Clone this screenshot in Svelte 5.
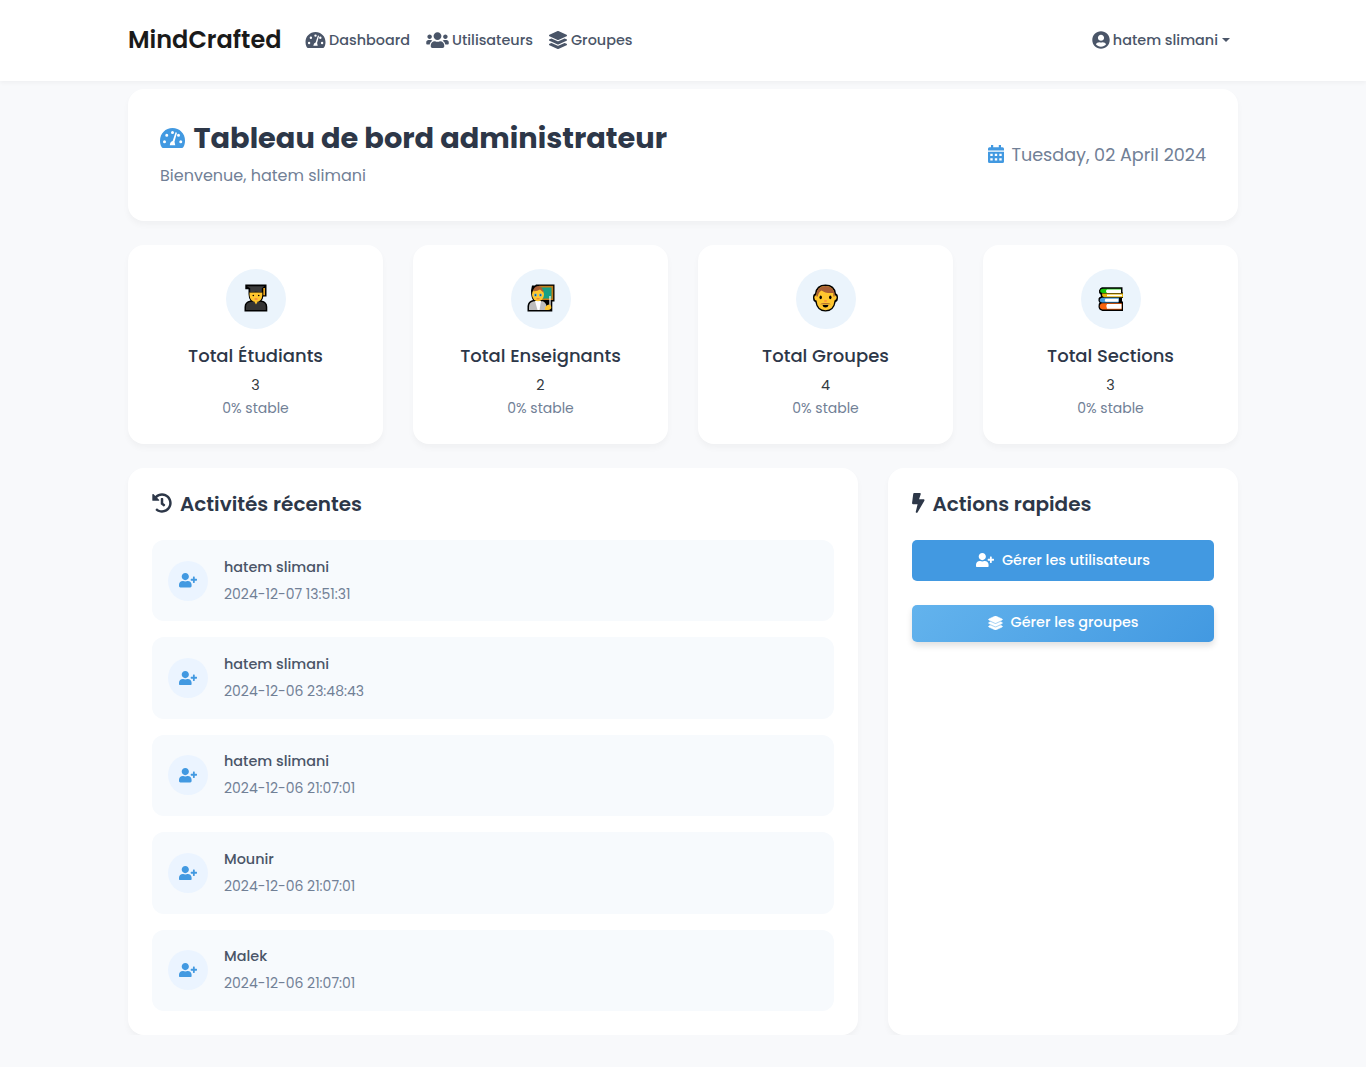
<script>
  const icons = {
    gauge: {
      box: '0 0 50 40',
      d: 'M25 0C11 0 0 11 0 25c0 4.700 .8 8.500 2.600 12C3.700 39.200 5 40 7.500 40h35c2.500 0 3.800-.8 4.900-3C49.200 33.500 50 29.700 50 25 50 11 39 0 25 0ZM9 24.500a3 3 0 1 1 0 6 3 3 0 1 1 0-6ZM13.500 11.500a3 3 0 1 1 0 6 3 3 0 1 1 0-6ZM25 6a3 3 0 1 1 0 6 3 3 0 1 1 0-6ZM37 11.500a3 3 0 1 1 0 6 3 3 0 1 1 0-6ZM41.500 24.500a3 3 0 1 1 0 6 3 3 0 1 1 0-6ZM31.200 8.600q2.500-.3 2.500 2L29 27.500 30.500 34.500H19.500Q20.500 27 25.300 26Z'
    },
    users: {
      box: '0 0 640 512',
      d: 'M96 224c35.3 0 64-28.7 64-64s-28.7-64-64-64-64 28.7-64 64 28.7 64 64 64zm448 0c35.3 0 64-28.7 64-64s-28.7-64-64-64-64 28.7-64 64 28.7 64 64 64zm32 32h-64c-17.6 0-33.5 7.1-45.1 18.6 40.3 22.1 68.9 62 75.1 109.4h66c17.7 0 32-14.3 32-32v-32c0-35.3-28.7-64-64-64zm-256 0c61.9 0 112-50.1 112-112S381.9 32 320 32 208 82.1 208 144s50.1 112 112 112zm76.8 32h-8.3c-20.8 10-43.9 16-68.5 16s-47.6-6-68.5-16h-8.3C179.6 288 128 339.6 128 403.2V432c0 26.5 21.5 48 48 48h288c26.5 0 48-21.5 48-48v-28.8c0-63.6-51.6-115.2-115.2-115.2zm-223.7-13.4C161.5 263.1 145.6 256 128 256H64c-35.3 0-64 28.7-64 64v32c0 17.7 14.3 32 32 32h65.9c6.3-47.4 34.9-87.3 75.2-109.4z'
    },
    layers: {
      box: '0 0 512 512',
      d: 'M12.41 148.02l232.94 105.67c6.8 3.09 14.49 3.09 21.29 0l232.94-105.67c16.55-7.51 16.55-32.52 0-40.03L266.65 2.31a25.607 25.607 0 0 0-21.29 0L12.41 107.98c-16.55 7.51-16.55 32.53 0 40.04zm487.18 88.28l-58.09-26.33-161.64 73.27c-7.56 3.43-15.59 5.17-23.86 5.17s-16.29-1.74-23.86-5.17L70.51 209.97l-58.1 26.33c-16.55 7.5-16.55 32.5 0 40l232.94 105.59c6.8 3.08 14.49 3.08 21.29 0L499.59 276.3c16.55-7.5 16.55-32.5 0-40zm0 127.8l-57.87-26.23-161.86 73.37c-7.56 3.43-15.59 5.17-23.86 5.17s-16.29-1.74-23.86-5.17L70.29 337.87 12.41 364.1c-16.55 7.5-16.55 32.5 0 40l232.94 105.59c6.8 3.08 14.49 3.08 21.29 0L499.59 404.1c16.55-7.5 16.55-32.5 0-40z'
    },
    account: {
      box: '0 0 496 512',
      d: 'M248 8C111 8 0 119 0 256s111 248 248 248 248-111 248-248S385 8 248 8zm0 96c48.6 0 88 39.4 88 88s-39.4 88-88 88-88-39.400-88-88 39.4-88 88-88zm0 344c-58.7 0-111.3-26.6-146.5-68.2 18.8-35.4 55.6-59.8 98.5-59.8 2.4 0 4.8.4 7.1 1.1 13 4.2 26.6 6.9 40.9 6.9 14.3 0 28-2.7 40.9-6.9 2.3-.7 4.7-1.1 7.1-1.1 42.9 0 79.7 24.4 98.5 59.8C359.3 421.4 306.7 448 248 448z'
    },
    calendar: {
      box: '0 0 16 18',
      d: 'M3 0h2.200v2.200H10.800V0H13v2.200h1.500Q16 2.200 16 3.700V5.600H0V3.700Q0 2.200 1.500 2.200H3ZM0 6.700H16V16.500Q16 18 14.500 18H1.500Q0 18 0 16.500ZM2.300 8.800v2.200h2.400V8.800ZM6.800 8.800v2.200h2.400V8.800ZM11.300 8.800v2.200h2.400V8.800ZM2.300 13.200v2.200h2.400v-2.200ZM6.800 13.200v2.200h2.400v-2.200ZM11.300 13.200v2.200h2.400v-2.200Z'
    },
    history: {
      box: '0 0 512 512',
      d: 'M504 255.531c.253 136.64-111.18 248.372-247.82 248.468-59.015.042-113.223-20.53-155.822-54.911-11.077-8.94-11.905-25.541-1.839-35.607l11.267-11.267c8.609-8.609 22.353-9.551 31.891-1.984C173.062 425.135 212.781 440 256 440c101.705 0 184-82.311 184-184 0-101.705-82.311-184-184-184-48.814 0-93.149 18.969-126.068 49.932l50.754 50.754c10.08 10.08 2.941 27.314-11.313 27.314H24c-8.837 0-16-7.163-16-16V38.627c0-14.254 17.234-21.393 27.314-11.314l49.372 49.372C129.209 34.136 189.552 8 256 8c136.81 0 247.747 110.78 248 247.531zm-180.912 78.784l9.823-12.63c8.138-10.463 6.253-25.542-4.21-33.679L288 256.349V152c0-13.255-10.745-24-24-24h-16c-13.255 0-24 10.745-24 24v135.651l65.409 50.874c10.463 8.137 25.541 6.253 33.679-4.21z'
    },
    bolt: {
      box: '0 0 320 512',
      d: 'M296 160H180.6l42.6-129.8C227.2 15 215.7 0 200 0H56C44 0 33.8 8.9 32.2 20.8l-32 240C-1.7 275.2 9.5 288 24 288h118.700L96.6 482.5c-3.6 15.2 8 29.5 23.3 29.5 8.4 0 16.4-4.4 20.8-12l176-304c9.3-15.9-2.2-36-20.7-36z'
    },
    userPlus: {
      box: '0 0 640 512',
      d: 'M624 208h-64v-64c0-8.8-7.2-16-16-16h-32c-8.8 0-16 7.2-16 16v64h-64c-8.8 0-16 7.2-16 16v32c0 8.8 7.2 16 16 16h64v64c0 8.8 7.2 16 16 16h32c8.8 0 16-7.2 16-16v-64h64c8.8 0 16-7.2 16-16v-32c0-8.8-7.2-16-16-16zm-400 48c70.7 0 128-57.3 128-128S294.7 0 224 0 96 57.3 96 128s57.3 128 128 128zm89.6 32h-16.7c-22.2 10.2-46.9 16-72.9 16s-50.6-5.8-72.9-16h-16.7C60.2 288 0 348.2 0 422.4V464c0 26.5 21.5 48 48 48h352c26.5 0 48-21.5 48-48v-41.6c0-74.2-60.2-134.4-134.4-134.4z'
    }
  };

  const stats = [
    { label: 'Total Étudiants', value: 3, picture: 'student' },
    { label: 'Total Enseignants', value: 2, picture: 'teacher' },
    { label: 'Total Groupes', value: 4, picture: 'man' },
    { label: 'Total Sections', value: 3, picture: 'books' }
  ];

  const activities = [
    { name: 'hatem slimani', time: '2024-12-07 13:51:31' },
    { name: 'hatem slimani', time: '2024-12-06 23:48:43' },
    { name: 'hatem slimani', time: '2024-12-06 21:07:01' },
    { name: 'Mounir', time: '2024-12-06 21:07:01' },
    { name: 'Malek', time: '2024-12-06 21:07:01' }
  ];
</script>

{#snippet icon(name, cls)}
  <svg class="icon {cls}" viewBox={icons[name].box} aria-hidden="true">
    <path d={icons[name].d} fill="currentColor" fill-rule={name === 'gauge' || name === 'calendar' ? 'evenodd' : 'nonzero'} />
  </svg>
{/snippet}

{#snippet emoji(kind)}
  <svg class="emoji" viewBox="0 0 28 28" aria-hidden="true">
    {#if kind === 'student'}
      <path d="M3.300 .6H24.500V12.500H21.300Q21 15.500 19.500 16.500 25.300 17.500 25.300 23V27.500H2.500V23Q2.500 17.500 8.500 16.500 6.500 14 6.500 10V5.300H3.300Z" fill="#000" />
      <path d="M4 26V23Q4 18.300 9.500 17.800H18.500Q23.800 18.300 23.800 23V26Z" fill="#343434" />
      <path d="M7.500 8.500H20.300V11Q20 17.900 14 17.900T7.500 11Z" fill="#ffc62e" />
      <path d="M12.300 17.500H15.700L14 20.500Z" fill="#ffc62e" />
      <path d="M4.800 2.200H22.500L19.800 4.200V8.300Q14 7.300 8.200 8.300V4.200Z" fill="#3b3b3b" />
      <path d="M21.300 4V11.200H23V4Z" fill="#e9a51f" />
      <circle cx="11.300" cy="11.500" r=".8" /><circle cx="16.700" cy="11.500" r=".8" />
      <path d="M12.500 15h3" stroke="#ef7348" stroke-width="1.200" />
    {:else if kind === 'teacher'}
      <path d="M5 1.500H8L9 .5H27.500V17.500H25.300V27.500H.5V22Q1 17 6 16 4 13.500 4 6.500Z" fill="#000" />
      <path d="M12 1.800H26.200V16H12Z" fill="#c17c18" />
      <path d="M14 3.500H24.500V14.500H14Z" fill="#16a085" />
      <path d="M2 26V23Q2 18 7 17.200H16Q20 19 20 26Z" fill="#bdbdbd" />
      <path d="M8 17H14L12.500 26H10.500Z" fill="#fff" />
      <ellipse cx="11" cy="10.500" rx="6" ry="6.700" fill="#ffc62e" />
      <path d="M6 7Q7 2.500 11 2T17 9L13 5.500Q9 8 6 7Z" fill="#a85f35" />
      <circle cx="8.500" cy="11" r="1.500" fill="#50aee8" /><circle cx="13.500" cy="11" r="1.500" fill="#50aee8" />
      <circle cx="8.500" cy="11" r=".6" /><circle cx="13.500" cy="11" r=".6" />
      <path d="M9.500 14.800h3" stroke="#e56c45" />
      <path d="M23 12V23" stroke="#fff" stroke-width="1.200" />
      <path d="M18 23.500Q20 20.500 22 20.500T24.300 23 21 26H18Z" fill="#ffc62e" />
    {:else if kind === 'man'}
      <path d="M1 13.500Q1 10 3 9.500 4 .5 13.500 .5T24 9.500Q26 10 26 13.500 26 17.500 23.700 18 22 27.500 13.500 27.500T3.300 18Q1 17.500 1 13.500Z" fill="#000" />
      <path d="M2.300 13.500Q2.300 11.500 4.300 11 5 2 13.500 2T22.700 11Q24.700 11.500 24.700 13.500T22.500 16.500Q21.500 26.200 13.500 26.200T4.500 16.500Q2.300 16 2.300 13.500Z" fill="#ffc62e" />
      <path d="M4.300 12.500Q4 2 13.500 2T22.700 12.500H21.300V9Q13 9.500 9.500 6.500 6.500 8 5.700 12.500Z" fill="#a85f35" />
      <ellipse cx="8.700" cy="13.300" rx="1.200" ry="1.900" /><ellipse cx="18.300" cy="13.300" rx="1.200" ry="1.900" />
      <path d="M12.200 17h2.600" stroke="#ff8b40" stroke-width="1.500" />
      <path d="M8 20.300Q10 18.800 13.500 19.300 17 18.800 19 20.300Z" fill="#9b5632" />
      <path d="M10.500 21H16.500Q16 23.500 13.500 23.500T10.500 21Z" />
    {:else}
      <path d="M5 3.300H25.500V8.500H26V14H25V17L26 18V27H5.500Q1.500 26 1.500 22.500 1.500 19.500 2.500 18.500 1 17 1.500 14.500 2 13 4 12.500L3.500 10.500Q1.500 9.500 2 6.500 3 3.500 5 3.300Z" fill="#000" />
      <path d="M6 4.800H24V8.900H6Q3 8.700 3.200 6.800T6 4.800Z" fill="#16c60c" />
      <path d="M10 5.600H24V8.900H10Q8 7.200 10 5.600Z" fill="#fff" />
      <path d="M5 9.400H26V13.300H7Q4.500 12 5 9.400Z" fill="#e6b60b" />
      <path d="M10 10.600H25V12.300H10Z" fill="#fff" />
      <path d="M5 13.800H22L21.500 18.600H5Q2.500 18 2.700 16T5 13.800Z" fill="#459bdc" />
      <path d="M8.500 14.800H21.500V17.700H8.500Q7 16.200 8.500 14.800Z" fill="#fff" />
      <path d="M5.500 19.300H24.700V25.500H5.500Q2.800 25 2.800 22.300T5.500 19.300Z" fill="#f7630c" />
      <path d="M10 20.100H24.500V24.800H10Q8.300 22.500 10 20.100Z" fill="#fff" />
    {/if}
  </svg>
{/snippet}

<header class="navbar">
  <div class="container nav-row">
    <a class="brand" href="/">MindCrafted</a>
    <nav class="links">
      <a class="link dash" href="/">{@render icon('gauge', 'nav-gauge')}<span>Dashboard</span></a>
      <a class="link util" href="/">{@render icon('users', 'nav-users')}<span>Utilisateurs</span></a>
      <a class="link grp" href="/">{@render icon('layers', 'nav-layers')}<span>Groupes</span></a>
    </nav>
    <a class="link account" href="/">{@render icon('account', 'nav-account')}<span>hatem slimani</span><i class="caret"></i></a>
  </div>
</header>

<main class="container">
  <section class="card hero">
    <div>
      <h1>{@render icon('gauge', 'hero-gauge')}<span>Tableau de bord administrateur</span></h1>
      <p class="welcome">Bienvenue, hatem slimani</p>
    </div>
    <div class="date">{@render icon('calendar', 'calendar')}<span>Tuesday, 02 April 2024</span></div>
  </section>

  <section class="stats">
    {#each stats as stat}
      <article class="card stat">
        <div class="bubble">{@render emoji(stat.picture)}</div>
        <h2>{stat.label}</h2>
        <div class="value">{stat.value}</div>
        <div class="trend">0% stable</div>
      </article>
    {/each}
  </section>

  <div class="columns">
    <section class="card panel">
      <h3>{@render icon('history', 'history')}<span>Activités récentes</span></h3>
      <ul>
        {#each activities as item}
          <li>
            <div class="avatar">{@render icon('userPlus', 'user-plus')}</div>
            <div>
              <div class="name">{item.name}</div>
              <div class="time">{item.time}</div>
            </div>
          </li>
        {/each}
      </ul>
    </section>

    <section class="card panel">
      <h3>{@render icon('bolt', 'bolt')}<span>Actions rapides</span></h3>
      <button class="action users-action">{@render icon('userPlus', 'user-plus')}<span>Gérer les utilisateurs</span></button>
      <button class="action groups-action">{@render icon('layers', 'button-layers')}<span>Gérer les groupes</span></button>
    </section>
  </div>
</main>

<style>
  :global(body) {
    background: #f8f9fb;
    font-family: Poppins, Inter, "Open Sans", sans-serif;
    color: #2d3748;
  }
  :global(*) { box-sizing: border-box; }
  h1, h2, h3, p, ul { margin: 0; padding: 0; }
  a { color: inherit; text-decoration: none; }
  span, .brand { white-space: nowrap; }
  .icon { display: block; flex: none; }
  .container { width: 1110px; margin: 0 auto; }
  .navbar { height: 81px; background: #fff; box-shadow: 0 2px 4px rgba(0, 0, 0, .04); }
  .nav-row { height: 80px; display: flex; align-items: center; }
  .brand { width: 177px; padding-bottom: 2px; font-size: 24px; font-weight: 600; color: #1a1a1a; }
  .links { display: flex; gap: 16px; }
  .link { display: flex; align-items: center; color: #4a5568; font-size: 14.400px; line-height: 22px; font-weight: 500; }
  .dash { width: 105px; gap: 3px; }
  .util { width: 107px; gap: 3px; }
  .grp { width: 84px; gap: 4px; }
  .nav-gauge { width: 21px; height: 16px; }
  .nav-users { width: 23px; height: 18px; }
  .nav-layers { width: 18px; height: 18px; }
  .nav-account { width: 18px; height: 18px; }
  .account { margin-left: auto; margin-right: 8px; gap: 3px; }
  .caret { margin-left: 1px; border: 4px solid transparent; border-top-color: currentColor; border-bottom: 0; }

  .card { background: #fff; border-radius: 16px; box-shadow: 0 4px 6px rgba(0, 0, 0, .035); }
  main { padding-top: 8px; }
  .hero { height: 132px; padding: 0 32px; display: flex; align-items: center; justify-content: space-between; }
  h1 { display: flex; align-items: center; gap: 8.500px; line-height: 36px; font-size: 28.800px; font-weight: 700; }
  .hero-gauge { width: 25px; height: 20px; color: #4299e1; }
  .welcome { margin-top: 8px; padding-bottom: 2px; font-size: 16px; line-height: 24px; color: #718096; }
  .date { display: flex; align-items: center; gap: 7px; color: #718096; font-size: 17.600px; }
  .calendar { width: 16px; height: 18px; margin-bottom: 2px; color: #4299e1; }

  .stats { margin-top: 24px; display: grid; grid-template-columns: repeat(4, 1fr); gap: 30px; }
  .stat { height: 199px; padding-top: 24px; display: flex; flex-direction: column; align-items: center; }
  .bubble { width: 60px; height: 60px; border-radius: 50%; background: #ebf4fc; display: grid; place-items: center; }
  .emoji { width: 28px; height: 28px; margin-bottom: 2px; }
  h2 { margin-top: 16px; font-size: 18px; line-height: 22px; font-weight: 500; }
  .value { margin-top: 7px; font-size: 14.400px; line-height: 22px; color: #343a40; }
  .trend { margin-top: 1px; font-size: 14px; line-height: 22px; color: #718096; }

  .columns { margin-top: 24px; display: grid; grid-template-columns: 730px 350px; gap: 30px; }
  .panel { height: 567px; padding: 24px; }
  h3 { display: flex; align-items: center; gap: 8px; height: 24px; margin-bottom: 24px; font-size: 20px; font-weight: 600; }
  .history { width: 20px; height: 20px; margin-bottom: 2px; }
  .bolt { width: 12.500px; height: 20px; margin-bottom: 2px; }
  ul { list-style: none; display: flex; flex-direction: column; gap: 16px; }
  li { height: 81.400px; padding: 0 16px; border-radius: 12px; background: #f7fafd; display: flex; align-items: center; gap: 16px; }
  .avatar { width: 40px; height: 40px; border-radius: 50%; background: #ebf4ff; display: grid; place-items: center; color: #4299e1; }
  .user-plus { width: 18px; height: 14.400px; }
  .name { font-size: 14.400px; line-height: 23px; font-weight: 500; color: #4a5568; }
  .time { margin-top: 4px; font-size: 14px; line-height: 23px; color: #718096; }
  .action { width: 100%; border: 0; border-radius: 5px; display: flex; align-items: center; justify-content: center; gap: 8px; padding: 0 0 2px; color: #fff; font: inherit; font-size: 14.400px; font-weight: 500; }
  .users-action { height: 41px; padding-bottom: 1px; background: #4299e1; }
  .groups-action { height: 37px; margin-top: 24px; background: linear-gradient(135deg, #63b3ed, #4299e1); box-shadow: 0 4px 6px rgba(0, 0, 0, .12); }
  .button-layers { width: 15px; height: 14px; stroke: currentColor; stroke-width: 18px; }
</style>
